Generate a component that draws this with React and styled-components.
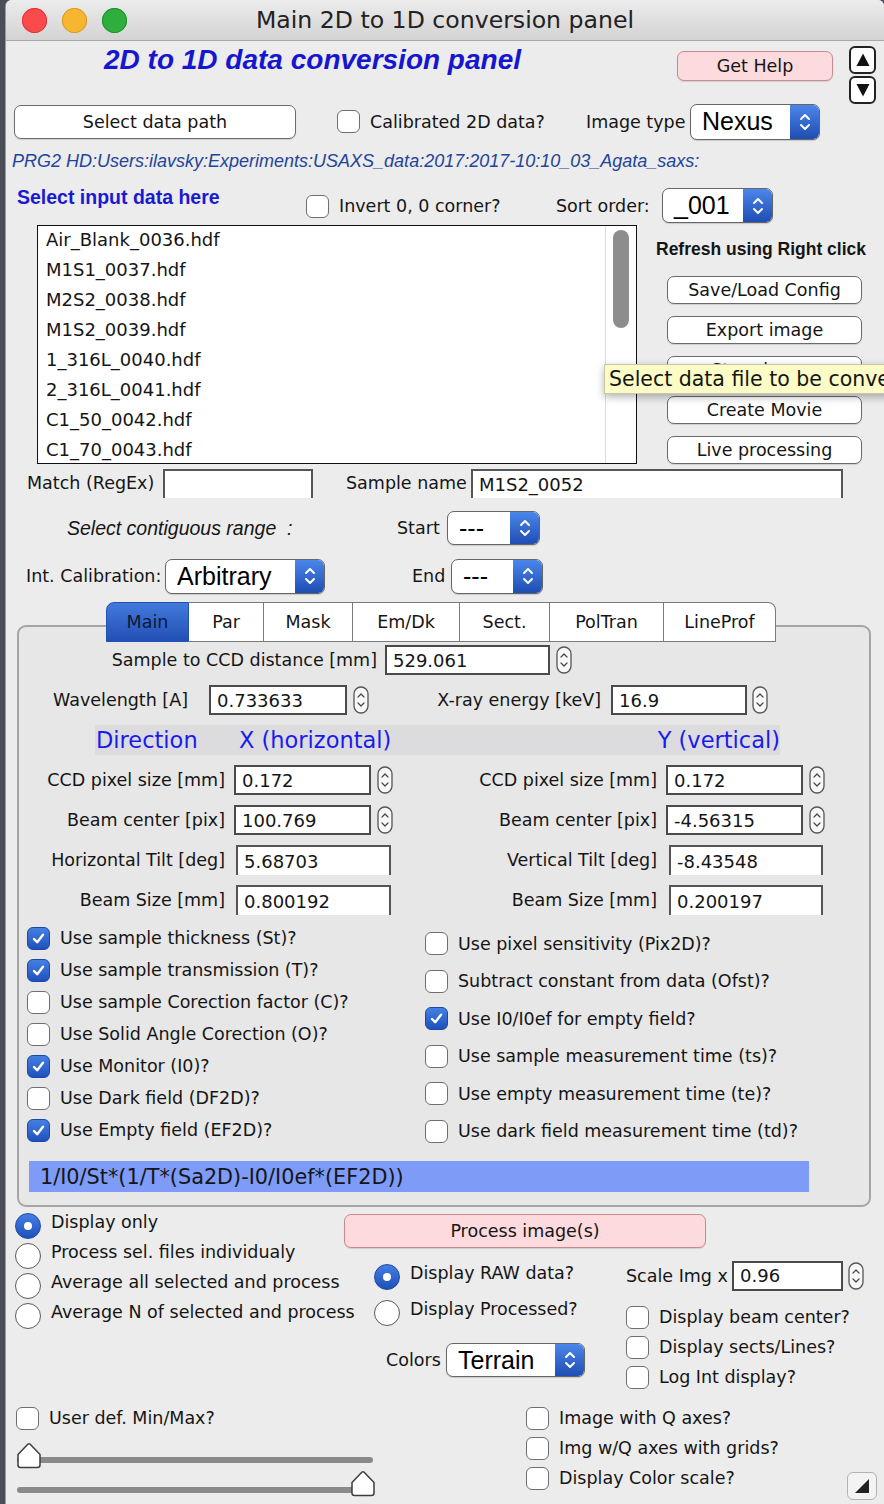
import React from 'react';
import styled, { createGlobalStyle, css } from 'styled-components';

const GlobalStyle = createGlobalStyle`
  html, body { margin: 0; padding: 0; }
  body {
    background: #4a4e56;
    overflow: hidden;
    font-family: "DejaVu Sans", "Liberation Sans", sans-serif;
    font-size: 17.5px;
    color: #151515;
  }
`;

const place = css`
  flex-shrink: 0;
  margin-left: ${p => p.$ml || 0}px;
  margin-top: ${p => p.$mt || 0}px;
`;

const Window = styled.div`
  position: relative;
  margin-left: 6px;
  width: 878px;
  height: 1504px;
  background: #ececec;
  border-radius: 6px 6px 0 0;
  box-shadow: -1px 0 0 #9a9a9a;
  overflow: hidden;
  display: flex;
  flex-direction: column;
`;

const TitleBar = styled.div`
  flex: 0 0 41px;
  box-sizing: border-box;
  display: grid;
  grid-template-columns: 1fr auto 1fr;
  align-items: center;
  background: linear-gradient(#ececec, #d3d3d3);
  border-bottom: 1px solid #a8a8a8;
`;
const Lights = styled.div`
  display: flex;
  gap: 15px;
  padding-left: 16px;
`;
const Light = styled.span`
  width: 25px;
  height: 25px;
  border-radius: 50%;
  background: ${p => p.$c};
  box-shadow: inset 0 0 0 1px ${p => p.$b};
`;
const Title = styled.div`
  font-size: 23.6px;
  color: #222;
  white-space: nowrap;
`;

const Row = styled.div`
  display: flex;
  align-items: ${p => (p.$top ? 'flex-start' : 'center')};
  flex: 0 0 ${p => p.$h}px;
  height: ${p => p.$h}px;
  margin-top: ${p => p.$mt || 0}px;
`;

const Heading = styled.div`
  ${place}
  width: ${p => p.$w}px;
  font-family: "Liberation Sans", sans-serif;
  font-weight: bold;
  font-style: italic;
  font-size: 28px;
  line-height: 32px;
  color: #1616cf;
  white-space: nowrap;
`;
const SectionTitle = styled.div`
  ${place}
  width: ${p => p.$w}px;
  font-family: "Liberation Sans", sans-serif;
  font-weight: bold;
  font-size: 19.5px;
  line-height: 24px;
  color: #1a1ad0;
  white-space: nowrap;
`;
const RefreshLabel = styled.div`
  ${place}
  font-family: "Liberation Sans", sans-serif;
  font-weight: bold;
  font-size: 17.5px;
  line-height: 24px;
  white-space: nowrap;
`;
const PathText = styled.div`
  ${place}
  font-family: "Liberation Sans", sans-serif;
  font-style: italic;
  font-size: 18px;
  color: #23449a;
  white-space: nowrap;
`;
const ItalicLabel = styled.div`
  ${place}
  width: ${p => p.$w}px;
  font-family: "Liberation Sans", sans-serif;
  font-style: italic;
  font-size: 19.5px;
  white-space: pre;
`;
const Label = styled.div`
  ${place}
  width: ${p => (p.$w ? `${p.$w}px` : 'auto')};
  text-align: ${p => (p.$right ? 'right' : 'left')};
  line-height: 24px;
  white-space: nowrap;
`;

const Btn = styled.div`
  ${place}
  box-sizing: border-box;
  width: ${p => p.$w}px;
  height: ${p => p.$h}px;
  display: flex;
  align-items: center;
  justify-content: center;
  border-radius: 7px;
  background: ${p => (p.$pink ? '#fcdadd' : '#ffffff')};
  border: 1.5px solid ${p => (p.$pink ? '#c98a8f' : '#6b6b6b')};
  box-shadow: 0 1px 1px rgba(0, 0, 0, 0.12);
  white-space: nowrap;
`;

const ArrowCol = styled.div`
  ${place}
  display: flex;
  flex-direction: column;
  gap: 2px;
`;
const ArrowBtn = styled.div`
  box-sizing: border-box;
  width: 27px;
  height: 28px;
  border: 2px solid #222;
  border-radius: 6px;
  background: #fff;
  display: flex;
  align-items: center;
  justify-content: center;
`;

/* checkbox */
const CheckRow = styled.div`
  ${place}
  display: flex;
  align-items: center;
  gap: 10px;
  height: ${p => p.$h || 30}px;
  width: ${p => (p.$w ? `${p.$w}px` : 'auto')};
  white-space: nowrap;
`;
const Box = styled.span`
  flex: 0 0 23px;
  width: 23px;
  height: 23px;
  box-sizing: border-box;
  border-radius: 6px;
  display: flex;
  align-items: center;
  justify-content: center;
  background: ${p => (p.$on ? 'linear-gradient(#4580e4, #1f51bc)' : '#ffffff')};
  border: ${p => (p.$on ? '1px solid #1c48a4' : '1.5px solid #6e6e6e')};
`;
function Check({ on, children, ...rest }) {
  return (
    <CheckRow {...rest}>
      <Box $on={on}>
        {on && (
          <svg width="15" height="15" viewBox="0 0 15 15">
            <path d="M3 8 L6.2 11.2 L12 3.8" fill="none" stroke="#fff" strokeWidth="2.4" strokeLinecap="round" strokeLinejoin="round" />
          </svg>
        )}
      </Box>
      <span>{children}</span>
    </CheckRow>
  );
}

/* radio */
const RadioDot = styled.span`
  flex: 0 0 26px;
  width: 26px;
  height: 26px;
  margin-top: 4px;
  box-sizing: border-box;
  border-radius: 50%;
  display: flex;
  align-items: center;
  justify-content: center;
  background: ${p => (p.$on ? 'linear-gradient(#447fe3, #1f4fba)' : '#ffffff')};
  border: ${p => (p.$on ? '1px solid #1c48a4' : '1.5px solid #5a5a5a')};
  &::after {
    content: '';
    display: ${p => (p.$on ? 'block' : 'none')};
    width: 8px;
    height: 8px;
    border-radius: 50%;
    background: #fff;
  }
`;
const RadioText = styled.span`
  margin-bottom: 4px;
`;
function Radio({ on, children, ...rest }) {
  return (
    <CheckRow {...rest}>
      <RadioDot $on={on} />
      <RadioText>{children}</RadioText>
    </CheckRow>
  );
}

/* popup menu */
const PopWrap = styled.div`
  ${place}
  box-sizing: border-box;
  width: ${p => p.$w}px;
  height: ${p => p.$h}px;
  display: flex;
  border: 1.5px solid #666;
  border-radius: 7px;
  overflow: hidden;
  background: #fff;
  box-shadow: 0 1px 1px rgba(0, 0, 0, 0.15);
`;
const PopText = styled.div`
  flex: 1;
  padding-left: 11px;
  display: flex;
  align-items: center;
  font-family: "Liberation Sans", sans-serif;
  font-size: 25px;
  color: #000;
  white-space: nowrap;
`;
const PopArrow = styled.div`
  flex: 0 0 29px;
  background: linear-gradient(#4c86ea, #1e4db3);
  display: flex;
  align-items: center;
  justify-content: center;
`;
function Popup({ value, ...rest }) {
  return (
    <PopWrap {...rest}>
      <PopText>{value}</PopText>
      <PopArrow>
        <svg width="14" height="22" viewBox="0 0 14 22">
          <path d="M3 8 L7 4 L11 8 M3 14 L7 18 L11 14" fill="none" stroke="#fff" strokeWidth="2" strokeLinecap="round" strokeLinejoin="round" />
        </svg>
      </PopArrow>
    </PopWrap>
  );
}

/* set variable input */
const Field = styled.div`
  ${place}
  box-sizing: border-box;
  width: ${p => p.$w}px;
  height: ${p => p.$h || 30}px;
  background: #fff;
  border: 2px solid #4a4a4a;
  ${p => p.$open && css`border-bottom: 0; border-color: #555;`}
  padding-left: 6px;
  display: flex;
  align-items: center;
  white-space: nowrap;
  overflow: hidden;
  font-size: 18px;
`;

const StepWrap = styled.div`
  ${place}
  width: 16px;
  height: 28px;
  display: flex;
`;
function Stepper(props) {
  return (
    <StepWrap {...props}>
      <svg width="16" height="28" viewBox="0 0 16 28">
        <rect x="1" y="1" width="14" height="26" rx="7" fill="#f7f7f7" stroke="#555" strokeWidth="1.3" />
        <path d="M5 11 L8 8 L11 11 M5 17 L8 20 L11 17" fill="none" stroke="#444" strokeWidth="1.2" strokeLinecap="round" strokeLinejoin="round" />
      </svg>
    </StepWrap>
  );
}

/* list box */
const ListBox = styled.div`
  ${place}
  box-sizing: border-box;
  width: 600px;
  height: 239px;
  border: 1.5px solid #111;
  background: #fff;
  display: flex;
`;
const ListItems = styled.div`
  flex: 1;
  padding-left: 8px;
  font-size: 18px;
`;
const ListItem = styled.div`
  height: 30px;
  line-height: 28px;
  white-space: nowrap;
`;
const ScrollTrack = styled.div`
  flex: 0 0 31px;
  box-sizing: border-box;
  border-left: 1px solid #dedede;
  padding: 4px 0 0 7px;
`;
const ScrollThumb = styled.div`
  width: 16px;
  height: 98px;
  border-radius: 8px;
  background: #8d8d8d;
`;
const SideCol = styled.div`
  ${place}
  display: flex;
  flex-direction: column;
`;
const SideButtons = styled.div`
  display: flex;
  flex-direction: column;
  gap: 12px;
  margin: 15px 0 0 11px;
`;

/* tabs + panel */
const TabBar = styled.div`
  ${place}
  position: relative;
  z-index: 2;
  display: flex;
  height: 40px;
  flex: 0 0 40px;
`;
const Tab = styled.div`
  box-sizing: border-box;
  width: ${p => p.$w}px;
  height: 40px;
  display: flex;
  align-items: center;
  justify-content: center;
  background: ${p => (p.$active ? 'linear-gradient(#4379dc, #2250b5)' : '#ffffff')};
  border: 1px solid ${p => (p.$active ? '#2250b5' : '#7a7a7a')};
  border-left-width: ${p => (p.$first ? 1 : 0)}px;
  border-radius: ${p => (p.$first ? '8px 0 0 0' : p.$last ? '0 8px 0 0' : '0')};
  color: ${p => (p.$active ? '#0c1838' : '#151515')};
`;
const Panel = styled.div`
  margin-left: 11px;
  margin-top: -17px;
  width: 854px;
  height: 582px;
  flex: 0 0 582px;
  box-sizing: border-box;
  border: 2px solid #a5a5a5;
  border-radius: 9px;
  background: #e7e7e7;
  padding-top: 18px;
  display: flex;
  flex-direction: column;
`;
const Band = styled.div`
  ${place}
  width: 685px;
  height: 30px;
  flex: 0 0 30px;
  display: flex;
  align-items: center;
  background: #dcdcdf;
  color: #1a1aee;
  font-size: 22.5px;
  white-space: nowrap;
`;
const BandCell = styled.span`
  width: ${p => (p.$w ? `${p.$w}px` : 'auto')};
  padding-left: ${p => (p.$first ? 1 : 0)}px;
  margin-left: ${p => (p.$end ? 'auto' : '0')};
`;
const Checks = styled.div`
  ${place}
  display: flex;
  height: 228px;
  flex: 0 0 228px;
`;
const Col = styled.div`
  ${place}
  display: flex;
  flex-direction: column;
  width: ${p => (p.$w ? `${p.$w}px` : 'auto')};
`;
const Formula = styled.div`
  ${place}
  box-sizing: border-box;
  width: 780px;
  height: 31px;
  flex: 0 0 31px;
  background: #7e9bf7;
  padding-left: 11px;
  display: flex;
  align-items: center;
  font-size: 20.8px;
  white-space: nowrap;
`;

/* bottom */
const Section = styled.div`
  display: flex;
  align-items: flex-start;
  flex: ${p => (p.$h ? `0 0 ${p.$h}px` : '1')};
`;
const SliderBox = styled.div`
  ${place}
  position: relative;
  width: 358px;
  height: 30px;
`;
const Track = styled.div`
  margin: 17px 0 0 1px;
  width: 356px;
  height: 6px;
  border-radius: 3px;
  background: #8a8a8a;
`;
const Thumb = styled.svg`
  position: absolute;
  left: ${p => p.$x}px;
  top: ${p => p.$y}px;
`;
function Slider({ x, y, ...rest }) {
  return (
    <SliderBox {...rest}>
      <Track />
      <Thumb $x={x} $y={y} width="26" height="27" viewBox="0 0 26 27">
        <path d="M2 23 Q2 25.5 4.5 25.5 L21.5 25.5 Q24 25.5 24 23 L24 12.5 L14.2 2.3 Q13 1.2 11.8 2.3 L2 12.5 Z" fill="#fff" stroke="#3d3d3d" strokeWidth="1.5" strokeLinejoin="round" />
      </Thumb>
    </SliderBox>
  );
}
const Grip = styled.div`
  margin-left: auto;
  margin-right: 7px;
  align-self: flex-end;
  margin-bottom: 4px;
  width: 30px;
  height: 28px;
  box-sizing: border-box;
  border: 1.5px solid #b3b3b3;
  border-radius: 6px;
  background: #f3f3f3;
  display: flex;
  align-items: center;
  justify-content: center;
`;
const Tooltip = styled.div`
  position: absolute;
  left: 598px;
  top: 364px;
  z-index: 5;
  box-sizing: border-box;
  height: 30px;
  padding: 0 40px 0 4px;
  background: #fcfcc6;
  border: 1px solid #c7c7a3;
  box-shadow: 0 3px 8px rgba(0, 0, 0, 0.3);
  display: flex;
  align-items: center;
  font-size: 20.5px;
  white-space: nowrap;
`;

const files = [
  'Air_Blank_0036.hdf',
  'M1S1_0037.hdf',
  'M2S2_0038.hdf',
  'M1S2_0039.hdf',
  '1_316L_0040.hdf',
  '2_316L_0041.hdf',
  'C1_50_0042.hdf',
  'C1_70_0043.hdf',
];
const sideButtons = ['Save/Load Config', 'Export image', 'Store image', 'Create Movie', 'Live processing'];
const tabs = [
  ['Main', 83],
  ['Par', 75],
  ['Mask', 89],
  ['Em/Dk', 107],
  ['Sect.', 90],
  ['PolTran', 114],
  ['LineProf', 112],
];
const leftChecks = [
  ['Use sample thickness (St)?', true],
  ['Use sample transmission (T)?', true],
  ['Use sample Corection factor (C)?', false],
  ['Use Solid Angle Corection (O)?', false],
  ['Use Monitor (I0)?', true],
  ['Use Dark field (DF2D)?', false],
  ['Use Empty field (EF2D)?', true],
];
const rightChecks = [
  ['Use pixel sensitivity (Pix2D)?', false],
  ['Subtract constant from data (Ofst)?', false],
  ['Use I0/I0ef for empty field?', true],
  ['Use sample measurement time (ts)?', false],
  ['Use empty measurement time (te)?', false],
  ['Use dark field measurement time (td)?', false],
];
const modes = [
  ['Display only', true],
  ['Process sel. files individualy', false],
  ['Average all selected and process', false],
  ['Average N of selected and process', false],
];

function Triangle({ down }) {
  return (
    <svg width="16" height="16" viewBox="0 0 16 16">
      <polygon points={down ? '1.5,2 14.5,2 8,14.5' : '1.5,14 14.5,14 8,1.5'} fill="#111" />
    </svg>
  );
}

export default function App() {
  return (
    <>
      <GlobalStyle />
      <Window>
        <TitleBar>
          <Lights>
            <Light $c="#fb4a4c" $b="#dc3539" />
            <Light $c="#f6b62f" $b="#d89b1f" />
            <Light $c="#2eaf3d" $b="#1f912b" />
          </Lights>
          <Title>Main 2D to 1D conversion panel</Title>
          <span />
        </TitleBar>

        <Row $h={62} $top>
          <Heading $ml={98} $mt={3} $w={573}>2D to 1D data conversion panel</Heading>
          <Btn $pink $w={156} $h={30} $mt={10}>Get Help</Btn>
          <ArrowCol $ml={16} $mt={5}>
            <ArrowBtn><Triangle /></ArrowBtn>
            <ArrowBtn><Triangle down /></ArrowBtn>
          </ArrowCol>
        </Row>

        <Row $h={37}>
          <Btn $ml={8} $w={282} $h={34}>Select data path</Btn>
          <Check $ml={41} $w={249}>Calibrated 2D data?</Check>
          <Label $w={104}>Image type</Label>
          <Popup $w={130} $h={36} value="Nexus" />
        </Row>

        <Row $h={42}>
          <PathText $ml={6}>PRG2 HD:Users:ilavsky:Experiments:USAXS_data:2017:2017-10:10_03_Agata_saxs:</PathText>
        </Row>

        <Row $h={43} $top>
          <SectionTitle $ml={11} $mt={3} $w={289}>Select input data here</SectionTitle>
          <Check $mt={11} $h={26} $w={250}>Invert 0, 0 corner?</Check>
          <Label $mt={12} $w={106}>Sort order:</Label>
          <Popup $mt={6} $w={111} $h={35} value="_001" />
        </Row>

        <Row $h={241} $top>
          <ListBox $ml={31}>
            <ListItems>
              {files.map(f => (
                <ListItem key={f}>{f}</ListItem>
              ))}
            </ListItems>
            <ScrollTrack>
              <ScrollThumb />
            </ScrollTrack>
          </ListBox>
          <SideCol $ml={19}>
            <RefreshLabel $mt={12}>Refresh using Right click</RefreshLabel>
            <SideButtons>
              {sideButtons.map(b => (
                <Btn key={b} $w={195} $h={28}>{b}</Btn>
              ))}
            </SideButtons>
          </SideCol>
        </Row>

        <Row $h={34}>
          <Label $ml={21} $w={136}>Match (RegEx)</Label>
          <Field $w={150} $h={29} $open />
          <Label $ml={33} $w={125}>Sample name</Label>
          <Field $w={372} $h={29} $open>M1S2_0052</Field>
        </Row>

        <Row $h={56}>
          <ItalicLabel $ml={61} $w={330}>Select contiguous range  :</ItalicLabel>
          <Label $w={50}>Start</Label>
          <Popup $w={93} $h={34} value="---" />
        </Row>

        <Row $h={40}>
          <Label $ml={20} $w={139}>Int. Calibration:</Label>
          <Popup $w={160} $h={35} value="Arbitrary" />
          <Label $ml={87} $w={39}>End</Label>
          <Popup $w={92} $h={35} value="---" />
        </Row>

        <TabBar $ml={100} $mt={6}>
          {tabs.map(([t, w], i) => (
            <Tab key={t} $w={w} $active={i === 0} $first={i === 0} $last={i === tabs.length - 1}>
              {t}
            </Tab>
          ))}
        </TabBar>

        <Panel>
          <Row $h={30}>
            <Label $right $w={358}>Sample to CCD distance [mm]</Label>
            <Field $ml={8} $w={165}>529.061</Field>
            <Stepper $ml={6} />
          </Row>
          <Row $h={30} $mt={10}>
            <Label $right $w={169}>Wavelength [A]</Label>
            <Field $ml={21} $w={138}>0.733633</Field>
            <Stepper $ml={6} />
            <Label $right $w={232}>X-ray energy [keV]</Label>
            <Field $ml={10} $w={136}>16.9</Field>
            <Stepper $ml={5} />
          </Row>
          <Band $ml={76} $mt={10}>
            <BandCell $w={143} $first>Direction</BandCell>
            <BandCell>X (horizontal)</BandCell>
            <BandCell $end>Y (vertical)</BandCell>
          </Band>
          <Row $h={30} $mt={10}>
            <Label $right $w={206}>CCD pixel size [mm]</Label>
            <Field $ml={9} $w={137}>0.172</Field>
            <Stepper $ml={6} />
            <Label $right $w={264}>CCD pixel size [mm]</Label>
            <Field $ml={9} $w={137}>0.172</Field>
            <Stepper $ml={6} />
          </Row>
          <Row $h={30} $mt={10}>
            <Label $right $w={206}>Beam center [pix]</Label>
            <Field $ml={9} $w={137}>100.769</Field>
            <Stepper $ml={6} />
            <Label $right $w={264}>Beam center [pix]</Label>
            <Field $ml={9} $w={137}>-4.56315</Field>
            <Stepper $ml={6} />
          </Row>
          <Row $h={30} $mt={10}>
            <Label $right $w={206}>Horizontal Tilt [deg]</Label>
            <Field $ml={11} $w={155} $open>5.68703</Field>
            <Label $right $w={266}>Vertical Tilt [deg]</Label>
            <Field $ml={12} $w={154} $open>-8.43548</Field>
          </Row>
          <Row $h={30} $mt={10}>
            <Label $right $w={206}>Beam Size [mm]</Label>
            <Field $ml={11} $w={155} $open>0.800192</Field>
            <Label $right $w={266}>Beam Size [mm]</Label>
            <Field $ml={12} $w={154} $open>0.200197</Field>
          </Row>

          <Checks $mt={7}>
            <Col $ml={8} $w={398}>
              {leftChecks.map(([t, on]) => (
                <Check key={t} on={on} $h={32}>{t}</Check>
              ))}
            </Col>
            <Col $mt={3}>
              {rightChecks.map(([t, on]) => (
                <Check key={t} on={on} $h={37.5}>{t}</Check>
              ))}
            </Col>
          </Checks>
          <Formula $ml={10} $mt={11}>1/I0/St*(1/T*(Sa2D)-I0/I0ef*(EF2D))</Formula>
        </Panel>

        <Section $h={185}>
          <Col $ml={9} $mt={2} $w={329}>
            {modes.map(([t, on]) => (
              <Radio key={t} on={on} $h={30}>{t}</Radio>
            ))}
          </Col>
          <Col>
            <Btn $pink $w={362} $h={34} $mt={7}>Process image(s)</Btn>
            <Row $h={130} $top $mt={9}>
              <Col $ml={30} $w={252}>
                <Radio on $h={36}>Display RAW data?</Radio>
                <Radio $h={36}>Display Processed?</Radio>
                <Row $h={34} $mt={14}>
                  <Label $ml={12} $w={60}>Colors</Label>
                  <Popup $w={139} $h={34} value="Terrain" />
                </Row>
              </Col>
              <Col>
                <Row $h={31} $mt={3}>
                  <Label $w={106}>Scale Img x</Label>
                  <Field $w={111}>0.96</Field>
                  <Stepper $ml={5} />
                </Row>
                <Col $mt={11}>
                  <Check $h={30}>Display beam center?</Check>
                  <Check $h={30}>Display sects/Lines?</Check>
                  <Check $h={30}>Log Int display?</Check>
                </Col>
              </Col>
            </Row>
          </Col>
        </Section>

        <Section>
          <Col $ml={10} $w={510}>
            <Check $mt={11} $h={30}>User def. Min/Max?</Check>
            <Slider $mt={7} x={0} y={2} />
            <Slider x={334} y={0} />
          </Col>
          <Col $mt={11}>
            <Check $h={30}>Image with Q axes?</Check>
            <Check $h={30}>Img w/Q axes with grids?</Check>
            <Check $h={30}>Display Color scale?</Check>
          </Col>
          <Grip>
            <svg width="18" height="18" viewBox="0 0 18 18">
              <polygon points="2,16 16,2 16,16" fill="#222" />
            </svg>
          </Grip>
        </Section>

        <Tooltip>Select data file to be converted</Tooltip>
      </Window>
    </>
  );
}
